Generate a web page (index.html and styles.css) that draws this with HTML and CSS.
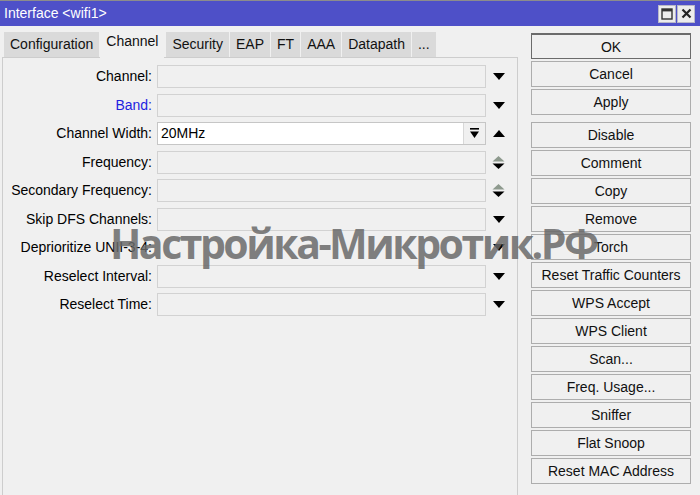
FILE: index.html
```html
<!DOCTYPE html>
<html lang="en">
<head>
    <meta charset="UTF-8">
    <title>Interface &lt;wifi1&gt;</title>
    <link rel="stylesheet" href="styles.css">
</head>
<body>
    <div class="window">
        <!-- Title bar -->
        <div class="titlebar">
            <span class="title">Interface &lt;wifi1&gt;</span>
            <div class="title-btns">
                <span class="tbtn">
                    <svg width="12" height="12" viewBox="0 0 12 12"><rect x="1" y="1" width="10" height="10" fill="none" stroke="#333" stroke-width="1.4"/><rect x="1" y="1" width="10" height="2.4" fill="#333"/></svg>
                </span>
                <span class="tbtn">
                    <svg width="11" height="11" viewBox="0 0 11 11"><path d="M1.5 1.5 L9.5 9.5 M9.5 1.5 L1.5 9.5" stroke="#222" stroke-width="2.2"/></svg>
                </span>
            </div>
        </div>

        <div class="main">
            <!-- Tabs + form -->
            <div class="left">
                <div class="tabs">
                    <div class="tab">Configuration</div>
                    <div class="tab active">Channel</div>
                    <div class="tab">Security</div>
                    <div class="tab">EAP</div>
                    <div class="tab">FT</div>
                    <div class="tab">AAA</div>
                    <div class="tab">Datapath</div>
                    <div class="tab">...</div>
                </div>
                <div class="panel">
                    <div class="form">
                        <label>Channel:</label>
                        <div class="field"></div>
                        <div class="arrow"><svg width="12" height="7" viewBox="0 0 12 7"><polygon points="0,0 12,0 6,7" fill="#000"/></svg></div>

                        <label class="blue">Band:</label>
                        <div class="field"></div>
                        <div class="arrow"><svg width="12" height="7" viewBox="0 0 12 7"><polygon points="0,0 12,0 6,7" fill="#000"/></svg></div>

                        <label>Channel Width:</label>
                        <div class="field white">
                            <span class="value">20MHz</span>
                            <span class="drop">
                                <svg width="9" height="11" viewBox="0 0 9 11"><rect x="0" y="0" width="9" height="1.6" fill="#000"/><polygon points="0,3.5 9,3.5 4.5,10" fill="#000"/></svg>
                            </span>
                        </div>
                        <div class="arrow"><svg width="12" height="7" viewBox="0 0 12 7"><polygon points="0,7 12,7 6,0" fill="#000"/></svg></div>

                        <label>Frequency:</label>
                        <div class="field"></div>
                        <div class="arrow"><svg width="13" height="13" viewBox="0 0 13 13"><polygon points="0.5,5.5 12.5,5.5 6.5,0" fill="#8e9a8e"/><polygon points="0.5,7.5 12.5,7.5 6.5,13" fill="#000"/></svg></div>

                        <label>Secondary Frequency:</label>
                        <div class="field"></div>
                        <div class="arrow"><svg width="13" height="13" viewBox="0 0 13 13"><polygon points="0.5,5.5 12.5,5.5 6.5,0" fill="#8e9a8e"/><polygon points="0.5,7.5 12.5,7.5 6.5,13" fill="#000"/></svg></div>

                        <label>Skip DFS Channels:</label>
                        <div class="field"></div>
                        <div class="arrow"><svg width="12" height="7" viewBox="0 0 12 7"><polygon points="0,0 12,0 6,7" fill="#000"/></svg></div>

                        <label>Deprioritize UNII-3-4:</label>
                        <div class="field blank"></div>
                        <div class="arrow"><svg width="12" height="7" viewBox="0 0 12 7"><polygon points="0,0 12,0 6,7" fill="#000"/></svg></div>

                        <label>Reselect Interval:</label>
                        <div class="field"></div>
                        <div class="arrow"><svg width="12" height="7" viewBox="0 0 12 7"><polygon points="0,0 12,0 6,7" fill="#000"/></svg></div>

                        <label>Reselect Time:</label>
                        <div class="field"></div>
                        <div class="arrow"><svg width="12" height="7" viewBox="0 0 12 7"><polygon points="0,0 12,0 6,7" fill="#000"/></svg></div>
                    </div>
                </div>
            </div>

            <!-- Buttons -->
            <div class="actions">
                <button class="default">OK</button>
                <button>Cancel</button>
                <button class="group-end">Apply</button>
                <button>Disable</button>
                <button>Comment</button>
                <button>Copy</button>
                <button>Remove</button>
                <button>Torch</button>
                <button>Reset Traffic Counters</button>
                <button>WPS Accept</button>
                <button>WPS Client</button>
                <button>Scan...</button>
                <button>Freq. Usage...</button>
                <button>Sniffer</button>
                <button>Flat Snoop</button>
                <button>Reset MAC Address</button>
            </div>
        </div>

        <div class="watermark">Настройка-Микротик.РФ</div>
    </div>
</body>
</html>
```
FILE: styles.css
```css
/* Reset */
* {
    margin: 0;
    padding: 0;
    box-sizing: border-box;
}

body {
    font-family: "Liberation Sans", Arial, sans-serif;
    font-size: 14px;
    color: #000;
    background: #f0f0f0;
    width: 700px;
    height: 495px;
    overflow: hidden;
}

.window {
    position: relative;
    width: 700px;
    height: 495px;
    display: flex;
    flex-direction: column;
    background: #f0f0f0;
    border-top: 1px solid #8c8c8c;
}

/* Title bar */
.titlebar {
    height: 25px;
    background: #4e50c8;
    display: flex;
    align-items: center;
    justify-content: space-between;
    padding: 0 5px 0 4px;
}

.title {
    color: #fff;
    line-height: 25px;
}

.title-btns {
    display: flex;
    gap: 1px;
}

.tbtn {
    width: 18px;
    height: 18px;
    background: #ececec;
    border: 1px solid #b8b8c8;
    display: flex;
    align-items: center;
    justify-content: center;
}

/* Main area */
.main {
    flex: 1;
    display: flex;
}

.left {
    width: 518px;
    display: flex;
    flex-direction: column;
    padding-left: 2px;
}

.tabs {
    display: flex;
    align-items: flex-end;
    height: 30px;
    margin-top: 1px;
    padding-left: 2px;
    gap: 1px;
    position: relative;
    z-index: 1;
}

.tab {
    height: 25px;
    line-height: 25px;
    padding: 0 6px;
    background: #dadada;
    color: #111;
}

.tab.active {
    height: 31px;
    padding-top: 2px;
    margin-bottom: -1px;
    background: #f0f0f0;
    margin-right: 1px;
}

.panel {
    flex: 1;
    border: 1px solid #cdcdcd;
    border-bottom: none;
    padding-top: 7px;
}

.form {
    display: grid;
    grid-template-columns: 154px 329px 24px;
    grid-auto-rows: 23px;
    row-gap: 5.5px;
}

.form label {
    text-align: right;
    padding-right: 5px;
    line-height: 23px;
    white-space: nowrap;
}

.form label.blue {
    color: #1f1fe0;
}

.field {
    border: 1px solid #d2d2d2;
    background: #f0f0f0;
    display: flex;
}

.field.white {
    background: #fff;
    border-color: #c6c6c6;
}

.field.blank {
    border-color: transparent;
}

.value {
    flex: 1;
    padding-left: 3px;
    line-height: 21px;
}

.drop {
    width: 22px;
    border-left: 1px solid #d8d8d8;
    background: #f0f0f0;
    display: flex;
    align-items: center;
    justify-content: center;
}

.arrow {
    display: flex;
    align-items: center;
    justify-content: center;
    padding-left: 1px;
}

/* Buttons column */
.actions {
    width: 160px;
    margin-left: 13px;
    padding-top: 7px;
    display: flex;
    flex-direction: column;
    gap: 2px;
}

.actions button {
    height: 26px;
    font-family: inherit;
    font-size: 14px;
    color: #111;
    background: #f0f0f0;
    border: 1px solid #adadad;
}

.actions button.default {
    border-color: #6b6b6b;
    border-top-width: 2px;
}

.actions button.group-end {
    margin-bottom: 5px;
}

/* Watermark over the form */
.watermark {
    position: absolute;
    left: 110px;
    top: 222px;
    font-family: "Open Sans", sans-serif;
    font-weight: 700;
    font-size: 41px;
    letter-spacing: -2.5px;
    line-height: 1;
    color: rgba(105, 105, 105, 0.85);
    white-space: nowrap;
    pointer-events: none;
}
```
